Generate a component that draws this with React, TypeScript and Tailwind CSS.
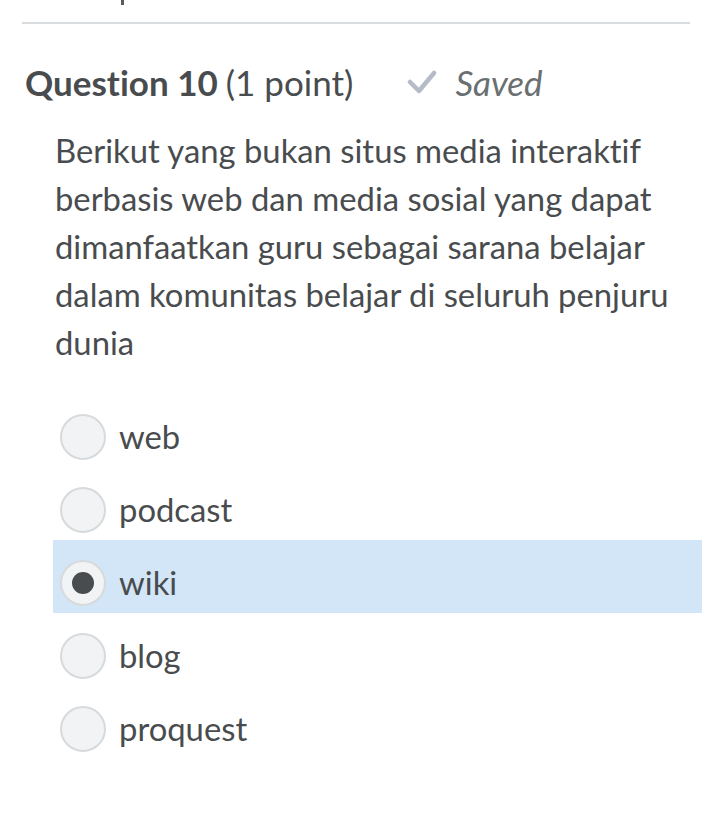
import React from "react";

const options = ["web", "podcast", "wiki", "blog", "proquest"];

function Radio({ checked }: { checked: boolean }) {
  return (
    <div className="w-[46px] h-[46px] shrink-0 rounded-full border-2 border-[#d7dadc] bg-[#f2f3f4] flex items-center justify-center">
      {checked && <div className="w-[22px] h-[22px] rounded-full bg-[#494c4e]" />}
    </div>
  );
}

export default function App() {
  return (
    <div
      className="w-[720px] h-[822px] bg-white text-[#494c4e] overflow-hidden [font-variant-ligatures:none]"
      style={{ fontFamily: "Lato, 'Open Sans', sans-serif" }}
    >
      <div className="h-[6px] pl-[121px]">
        <div className="w-[3px] h-[5px] bg-[#5a5d60]" />
      </div>
      <div className="mt-[16px] mx-[22px] w-[668px] h-[2px] bg-[#d9dcde]" />
      <div className="mt-[37px] pl-[25px] flex items-center h-[42px]">
        <span className="text-[35px] leading-[42px] font-bold">Question 10</span>
        <span className="text-[35px] leading-[42px] ml-[8px]">(1 point)</span>
        <svg className="ml-[54px]" width="30" height="24" viewBox="0 0 30 24">
          <path d="M3 12 L12 21 L27 3" fill="none" stroke="#b6bbc8" strokeWidth="4.5" strokeLinecap="round" strokeLinejoin="round" />
        </svg>
        <span className="ml-[18px] text-[35px] leading-[42px] italic text-[#6a6f72]">Saved</span>
      </div>
      <div className="mt-[24px] pl-[55px] w-[690px] text-[32.8px] leading-[48px]">
        Berikut yang bukan situs media interaktif berbasis web dan media sosial yang dapat dimanfaatkan guru sebagai sarana belajar dalam komunitas belajar di seluruh penjuru dunia
      </div>
      <div className="mt-[27px] flex flex-col">
        {options.map((o) => {
          const sel = o === "wiki";
          return (
            <div
              key={o}
              className={
                "ml-[53px] w-[649px] h-[73px] pl-[7px] pt-[12px] flex items-center gap-[13px] " +
                (sel ? "bg-[#d3e6f7]" : "")
              }
            >
              <Radio checked={sel} />
              <span className="text-[32.8px] leading-[40px]">{o}</span>
            </div>
          );
        })}
      </div>
    </div>
  );
}
